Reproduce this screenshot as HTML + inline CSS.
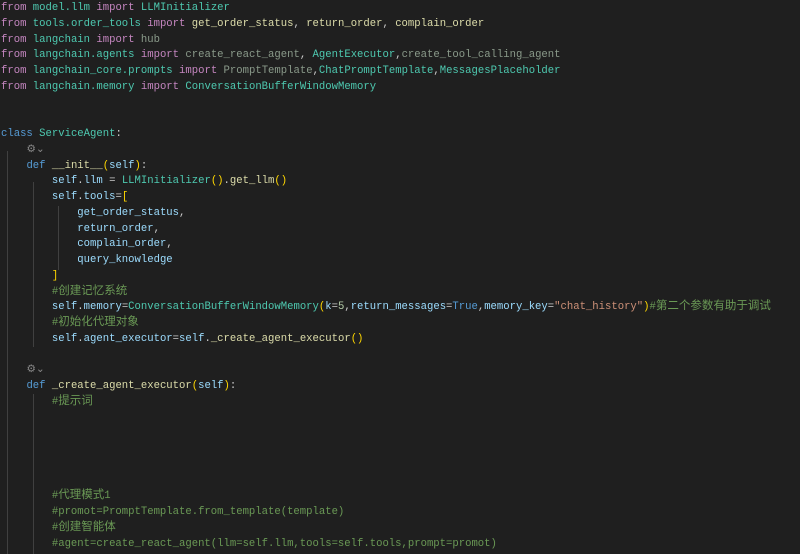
<!DOCTYPE html>
<html><head><meta charset="utf-8"><style>
html,body{margin:0;padding:0;background:#1f1f1f;width:800px;height:552px;overflow:hidden}
pre{margin:0;padding:0;position:absolute;top:1px;left:1px;font-family:"Liberation Mono","Noto Sans CJK SC",monospace;font-size:10.6px;line-height:15.75px;color:#cccccc;white-space:pre}
.k{color:#c586c0}.m{color:#4ec9b0}.f{color:#dcdcaa}.d{color:#8a9a8a}.b{color:#569cd6}.v{color:#9cdcfe}.c{color:#6a9955}.s{color:#ce9178}.y{color:#ffd700}.p{color:#da70d6}.n{color:#b5cea8}.g{color:#888}
.cj{font-size:11.5px;line-height:0}
.guide{position:absolute;width:1px;background:#404040}
</style></head><body>
<div class="guide" style="left:7px;top:151px;height:403px"></div>
<div class="guide" style="left:33px;top:182px;height:165px"></div>
<div class="guide" style="left:33px;top:394px;height:160px"></div>
<div class="guide" style="left:58px;top:206px;height:64px"></div>
<pre><span class="k">from</span> <span class="m">model.llm</span> <span class="k">import</span> <span class="m">LLMInitializer</span>
<span class="k">from</span> <span class="m">tools.order_tools</span> <span class="k">import</span> <span class="f">get_order_status</span>, <span class="f">return_order</span>, <span class="f">complain_order</span>
<span class="k">from</span> <span class="m">langchain</span> <span class="k">import</span> <span class="d">hub</span>
<span class="k">from</span> <span class="m">langchain.agents</span> <span class="k">import</span> <span class="d">create_react_agent</span>, <span class="m">AgentExecutor</span>,<span class="d">create_tool_calling_agent</span>
<span class="k">from</span> <span class="m">langchain_core.prompts</span> <span class="k">import</span> <span class="d">PromptTemplate</span>,<span class="m">ChatPromptTemplate</span>,<span class="m">MessagesPlaceholder</span>
<span class="k">from</span> <span class="m">langchain.memory</span> <span class="k">import</span> <span class="m">ConversationBufferWindowMemory</span>


<span class="b">class</span> <span class="m">ServiceAgent</span>:
    <span class="g">⚙⌄</span>
    <span class="b">def</span> <span class="f">__init__</span><span class="y">(</span><span class="v">self</span><span class="y">)</span>:
        <span class="v">self</span>.<span class="v">llm</span> = <span class="m">LLMInitializer</span><span class="y">()</span>.<span class="f">get_llm</span><span class="y">()</span>
        <span class="v">self</span>.<span class="v">tools</span>=<span class="y">[</span>
            <span class="v">get_order_status</span>,
            <span class="v">return_order</span>,
            <span class="v">complain_order</span>,
            <span class="v">query_knowledge</span>
        <span class="y">]</span>
        <span class="c">#<span class="cj">创建记忆系统</span></span>
        <span class="v">self</span>.<span class="v">memory</span>=<span class="m">ConversationBufferWindowMemory</span><span class="y">(</span><span class="v">k</span>=<span class="n">5</span>,<span class="v">return_messages</span>=<span class="b">True</span>,<span class="v">memory_key</span>=<span class="s">"chat_history"</span><span class="y">)</span><span class="c">#<span class="cj">第二个参数有助于调试</span></span>
        <span class="c">#<span class="cj">初始化代理对象</span></span>
        <span class="v">self</span>.<span class="v">agent_executor</span>=<span class="v">self</span>.<span class="f">_create_agent_executor</span><span class="y">()</span>

    <span class="g">⚙⌄</span>
    <span class="b">def</span> <span class="f">_create_agent_executor</span><span class="y">(</span><span class="v">self</span><span class="y">)</span>:
        <span class="c">#<span class="cj">提示词</span></span>





        <span class="c">#<span class="cj">代理模式</span>1</span>
        <span class="c">#promot=PromptTemplate.from_template(template)</span>
        <span class="c">#<span class="cj">创建智能体</span></span>
        <span class="c">#agent=create_react_agent(llm=self.llm,tools=self.tools,prompt=promot)</span>
</pre>
</body></html>
